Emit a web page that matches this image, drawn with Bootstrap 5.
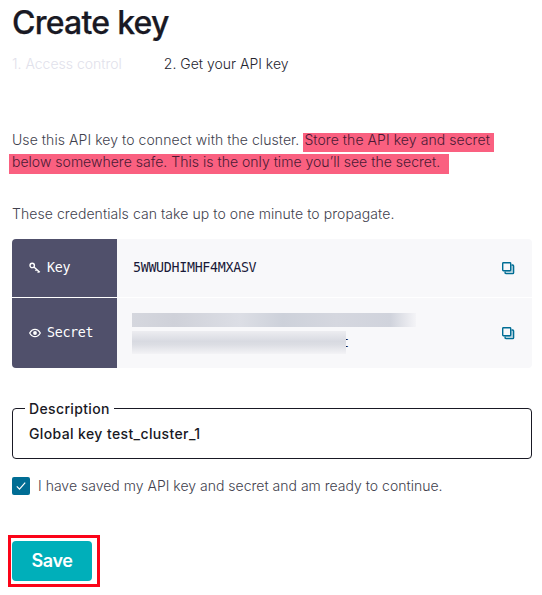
<!DOCTYPE html>
<html lang="en">
<head>
<meta charset="utf-8">
<meta name="viewport" content="width=device-width, initial-scale=1">
<title>Create key</title>
<link href="https://cdn.jsdelivr.net/npm/bootstrap@5.3.0/dist/css/bootstrap.min.css" rel="stylesheet">
<style>
body{font-family:Inter,"Liberation Sans",sans-serif;font-size:14px;font-weight:300;line-height:22px;color:#41414d;letter-spacing:.07px;background:#fff;overflow:hidden}
.page{width:542px;padding:5px 10px 0 12px}
h1{font-size:32px;font-weight:500;line-height:36px;letter-spacing:-.75px;color:#191924;-webkit-text-stroke:.25px #191924}
.steps{margin-top:12px;gap:42px;letter-spacing:0}
.step-off{color:#e1e1eb}
.step-on{color:#25252f}
.intro{margin-top:54px}
.intro-line{height:22px}
.hl{background:#fa6080;color:#4a1a34}
.hl-a{margin-top:4px;padding:0 4px 0 1px;line-height:14px;height:19px}
.hl-b{margin:3px 0 0 -3px;padding:0 9px 0 3px;line-height:16px;height:20px;letter-spacing:.02px}
.note{margin-top:30px}
.creds{margin-top:14px;gap:1px;border-radius:4px}
.mono{font-family:"DejaVu Sans Mono","Liberation Mono",monospace;font-size:13.3px;font-weight:400;letter-spacing:-.3px}
.cred-key{height:58px}
.cred-secret{height:70px}
.cred-name{width:105px;background:#50506b;color:#fff;padding-left:17px;gap:6px}
.cred-value{background:#f8f8fa;padding:0 17px 0 16px;color:#191938}
.masked{margin-left:-1px;gap:4px}
.mask-a{width:284px;height:14px;background:linear-gradient(90deg,#d5d7de 0,#cfd1d9 15%,#dcdee5 38%,#cdd1da 53%,#d5d7df 72%,#d0d3dc 91%,#f4f4f7 100%)}
.mask-b{position:relative;z-index:1;width:214px;height:23px;background:linear-gradient(#ededf1 0,#d8dae1 45%,#dcdee4 60%,#f3f3f6 100%)}
.last-char{margin-left:-5px;line-height:23px}
.desc{margin-top:32px}
.desc legend{float:none;width:auto;margin:0 0 0 12px;padding:0 4px;font-size:14px;font-weight:500;line-height:17px;letter-spacing:.36px}
.desc fieldset{height:59px;border:1px solid #191924;border-radius:4px;color:#191924}
.desc-text{padding:6px 16px 0;font-weight:500;letter-spacing:.38px}
.confirm{margin-top:16px;gap:8px;letter-spacing:.01px}
.tick{width:18px;height:18px;background:#006d94;border-radius:2px}
.save-frame{width:92px;height:52px;border:3px solid #fb0418;margin:38px 0 0 -4px;padding:3px 5px 4px 1px}
.save-btn{width:80px;height:40px;background:#00afba;color:#fff;border:0;border-radius:4px;font-size:18px;font-weight:600;letter-spacing:-.45px;line-height:22px}
</style>
</head>
<body>
<main class="page">
  <h1 class="m-0">Create key</h1>
  <div class="steps d-flex"><span class="step-off">1. Access control</span><span class="step-on">2. Get your API key</span></div>
  <div class="intro text-nowrap">
    <div class="intro-line d-flex align-items-start"><span>Use this API key to connect with the cluster.&nbsp;</span><span class="hl hl-a">Store the API key and secret</span></div>
    <div class="intro-line d-flex align-items-start"><span class="hl hl-b">below somewhere safe. This is the only time you’ll see the secret.</span></div>
  </div>
  <div class="note">These credentials can take up to one minute to propagate.</div>
  <div class="creds mono d-flex flex-column overflow-hidden">
    <div class="cred-key d-flex">
      <div class="cred-name d-flex align-items-center">
        <svg width="12" height="12" viewBox="0 0 12 12" fill="none" stroke="#fff" stroke-width="1.4"><circle cx="3.2" cy="3.4" r="2.2"/><path d="M4.9 5 10.8 10.3M7.6 7.4 6.6 8.8M9.7 9.3 8.7 10.7"/></svg>
        <span>Key</span>
      </div>
      <div class="cred-value flex-grow-1 d-flex align-items-center justify-content-between">
        <span>5WWUDHIMHF4MXASV</span>
        <svg width="14" height="14" viewBox="0 0 14 14" fill="none" stroke="#006d94" stroke-width="1.4"><path fill="#b5d3df" d="M10.5 4h1.2q.9 0 .9.9v6.8q0 .9-.9.9H5q-.9 0-.9-.9v-1.2"/><rect x="1.7" y="1.7" width="8" height="8" rx=".7" fill="#f8f8fa"/></svg>
      </div>
    </div>
    <div class="cred-secret d-flex">
      <div class="cred-name d-flex align-items-center">
        <svg width="12" height="12" viewBox="0 0 12 12" fill="none" stroke="#fff" stroke-width="1.3"><path d="M.7 6Q2.7 2.3 6 2.3T11.3 6Q9.3 9.7 6 9.7T.7 6Z"/><circle cx="6" cy="6" r="1.9" fill="#fff" stroke="none"/></svg>
        <span>Secret</span>
      </div>
      <div class="cred-value flex-grow-1 d-flex align-items-center justify-content-between">
        <div class="masked d-flex flex-column">
          <div class="mask-a"></div>
          <div class="d-flex"><div class="mask-b"></div><span class="last-char">t</span></div>
        </div>
        <svg width="14" height="14" viewBox="0 0 14 14" fill="none" stroke="#006d94" stroke-width="1.4"><path fill="#b5d3df" d="M10.5 4h1.2q.9 0 .9.9v6.8q0 .9-.9.9H5q-.9 0-.9-.9v-1.2"/><rect x="1.7" y="1.7" width="8" height="8" rx=".7" fill="#f8f8fa"/></svg>
      </div>
    </div>
  </div>
  <div class="desc"><fieldset><legend>Description</legend><div class="desc-text">Global key test_cluster_1</div></fieldset></div>
  <div class="confirm d-flex align-items-center">
    <span class="tick d-flex align-items-center justify-content-center"><svg width="10" height="10" viewBox="0 0 10 10" fill="none" stroke="#fff" stroke-width="1.2"><path d="M.8 5.4 3.5 8.2 9.2 1.6"/></svg></span>
    <span>I have saved my API key and secret and am ready to continue.</span>
  </div>
  <div class="save-frame"><button type="button" class="save-btn btn p-0 d-block">Save</button></div>
</main>
<script src="https://cdn.jsdelivr.net/npm/bootstrap@5.3.0/dist/js/bootstrap.bundle.min.js"></script>
</body>
</html>
